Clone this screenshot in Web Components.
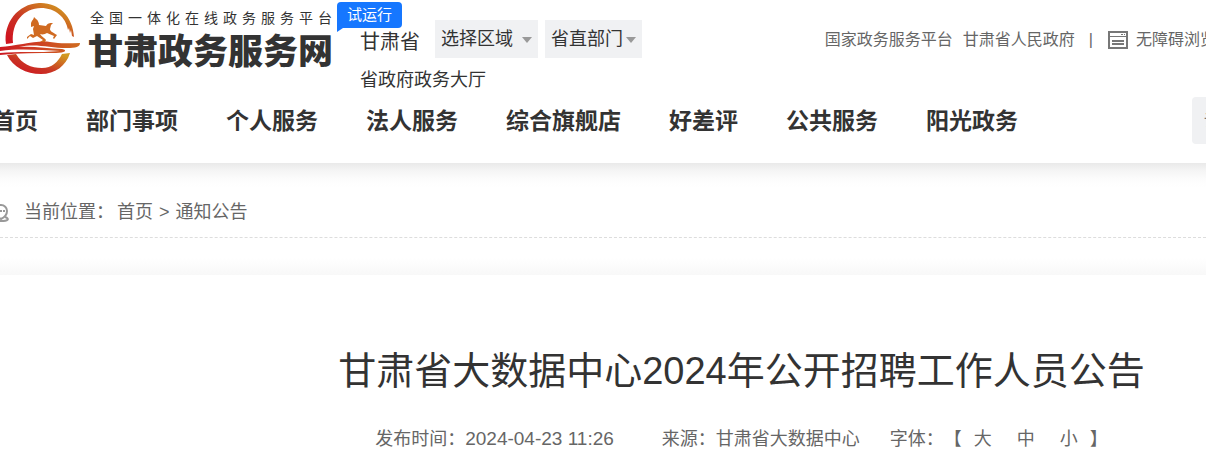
<!DOCTYPE html>
<html lang="zh-CN">
<head>
<meta charset="utf-8">
<meta name="viewport" content="width=device-width, initial-scale=1">
<title>甘肃省大数据中心2024年公开招聘工作人员公告</title>
<style>
  html, body { margin: 0; }
  body {
    overflow-x: clip;
    background: #fff;
    color: #333;
    font-family: "Liberation Sans", "Noto Sans CJK SC", sans-serif;
    font-size: 18px;
    line-height: 24px;
    text-spacing-trim: space-all;
  }
</style>
</head>
<body>
<gs-header>
  <gs-logo slot="brand"></gs-logo>
  <gs-region slot="region"></gs-region>
  <gs-toplinks slot="links"></gs-toplinks>
  <gs-nav slot="nav"></gs-nav>
</gs-header>
<gs-breadcrumb></gs-breadcrumb>
<gs-article>
  <span slot="title">甘肃省大数据中心2024年公开招聘工作人员公告</span>
  <span slot="date">2024-04-23 11:26</span>
  <span slot="source">甘肃省大数据中心</span>
</gs-article>

<script>
function define(name, html) {
  const template = document.createElement('template');
  template.innerHTML = html;
  customElements.define(name, class extends HTMLElement {
    constructor() {
      super();
      this.attachShadow({ mode: 'open' }).append(template.content.cloneNode(true));
    }
  });
}

define('gs-header', `
<style>
  :host { display: block; background: #fff; padding-bottom: 19px; }
  .top { display: flex; align-items: flex-start; min-height: 97px; }
  .links { margin-left: auto; padding-top: 28px; }
</style>
<header>
  <div class="top">
    <slot name="brand"></slot>
    <slot name="region"></slot>
    <div class="links"><slot name="links"></slot></div>
  </div>
  <slot name="nav"></slot>
</header>`);

define('gs-logo', `
<style>
  :host { display: block; position: relative; flex: none; }
  a { display: flex; gap: 8px; color: #333; text-decoration: none; }
  svg { display: block; }
  .words { width: 248px; padding-top: 8px; }
  .sub { display: block; margin: 0 4px 0 2px; font-size: 14px; line-height: 20px;
         text-align: justify; text-align-last: justify; }
  .name { display: block; font-size: 35px; line-height: 48px; font-weight: 900; white-space: nowrap; }
  .badge { position: absolute; left: 337px; top: 2px; width: 65px; box-sizing: border-box;
           background: #1677ff; color: #fff; border-radius: 4px 4px 4px 0;
           font-size: 15px; line-height: 26px; text-align: center; white-space: nowrap; }
  .badge::after { content: ""; position: absolute; left: 0; top: 100%;
                  border-top: 4px solid #1677ff; border-right: 6px solid transparent; }
</style>
<a href="#">
  <svg width="80" height="80" viewBox="0 0 80 80" aria-hidden="true">
    <defs>
      <linearGradient id="g" x1="0.1" y1="0.9" x2="0.9" y2="0.1">
        <stop offset="0" stop-color="#cf1620"/><stop offset="0.4" stop-color="#c93324"/>
        <stop offset="1" stop-color="#d29a20"/>
      </linearGradient>
      <linearGradient id="s" x1="0" x2="1">
        <stop offset="0" stop-color="#cc1822"/><stop offset="1" stop-color="#cf6c20"/>
      </linearGradient>
    </defs>
    <path fill="url(#g)" d="M6 44C3 23 18 4 39 3C58 2 73 16 74 37L72 36L71 30L70 33L69 28L68 30C66 17 55 8 41 8C24 8 11 22 13 43Z"/>
    <path fill="url(#g)" d="M7 55L16 54C22 64 31 68 42 68C52 68 58 62 62 54L70 53C66 66 55 74 41 74C26 74 13 67 7 55Z"/>
    <path fill="url(#s)" d="M0 47C18 46 36 40 50 42C61 44 70 43 80 43C80 47 76 48 67 48C49 48 36 43 19 47C34 46 48 49 62 49C68 50 65 53 56 53C38 53 19 53 0 55V53C18 51 38 53 60 51C42 50 19 48 0 51Z"/>
    <path fill="#d06a21" d="M31 23C32 20 34 19 34 17L36 19C38 20 39 23 39 25L46 26C48 23 49 23 53 23L51 25L50 29C50 31 52 32 57 35L54 39L53 38L54 36L47 33C45 34 43 35 40 34C42 37 45 38 46 40L45 42H40L43 40L37 36L33 38L30 36L27 39V37L31 34L34 35L33 29L34 26L31 27Z"/>
  </svg>
  <span class="words">
    <span class="sub">全国一体化在线政务服务平台</span>
    <span class="name">甘肃政务服务网</span>
  </span>
</a>
<span class="badge">试运行</span>`);

define('gs-region', `
<style>
  :host { display: block; flex: none; margin-left: 24px; padding-top: 20px; }
  .row { display: flex; }
  .prov { font-size: 20px; line-height: 44px; width: 75px; }
  .pick { position: relative; height: 38px; margin-right: 7px; background: #f0f1f3; }
  select { appearance: none; border: 0; border-radius: 0; margin: 0; background: none; color: #333;
           font-family: inherit; font-size: 18px; height: 38px; padding: 0 0 0 6px; }
  .area select { width: 103px; }
  .dept select { width: 97px; }
  svg { position: absolute; right: 6px; top: 17px; pointer-events: none; }
  .hall { display: block; line-height: 32px; color: inherit; text-decoration: none; }
</style>
<div class="row">
  <span class="prov">甘肃省</span>
  <div class="pick area"><select aria-label="选择区域"><option>选择区域</option></select><svg width="10" height="6" aria-hidden="true"><path fill="#999" d="M0 0H10L5 6Z"/></svg></div>
  <div class="pick dept"><select aria-label="省直部门"><option>省直部门</option></select><svg width="10" height="6" aria-hidden="true"><path fill="#999" d="M0 0H10L5 6Z"/></svg></div>
</div>
<a class="hall" href="#">省政府政务大厅</a>`);

define('gs-toplinks', `
<style>
  :host { display: flex; align-items: center; margin-right: -10px; color: #666;
          font-size: 16px; white-space: nowrap; }
  a { color: inherit; text-decoration: none; }
  .gov { margin-left: 10px; }
  .bar { margin: 0 15px 0 14px; }
  svg { display: block; margin-right: 8px; }
</style>
<a href="#">国家政务服务平台</a>
<a class="gov" href="#">甘肃省人民政府</a>
<span class="bar">|</span>
<svg width="20" height="18" viewBox="0 0 20 18" aria-hidden="true">
  <path fill="none" stroke="#777" stroke-width="2" d="M1 1H19V17H1Z"/>
  <path stroke="#777" d="M1 5.500H19"/>
  <path stroke="#777" d="M13 3.500H15M16 3.500H17"/>
  <path stroke="#777" stroke-width="2" d="M4 10H16M4 13H16"/>
</svg>
<a href="#">无障碍浏览</a>`);

define('gs-nav', `
<style>
  :host { display: flex; align-items: center; height: 47px; }
  nav { display: flex; flex: none; gap: 48px; margin-left: -8px; font-size: 23px; font-weight: 700;
        line-height: 32px; white-space: nowrap; }
  a { color: inherit; text-decoration: none; }
  .search { flex: none; margin-left: auto; margin-right: -236px; width: 250px; height: 47px; box-sizing: border-box;
            border: 0; border-radius: 4px; background: #f0f1f3; padding: 0 12px; font-family: inherit;
            font-size: 16px; color: #333; }
</style>
<nav aria-label="主导航">
  <a href="#">首页</a><a href="#">部门事项</a><a href="#">个人服务</a><a href="#">法人服务</a><a href="#">综合旗舰店</a><a href="#">好差评</a><a href="#">公共服务</a><a href="#">阳光政务</a>
</nav>
<input class="search" type="search" aria-label="搜索" placeholder="请输入">`);

define('gs-breadcrumb', `
<style>
  :host { display: block; color: #666; }
  .shade { background: linear-gradient(#e9e9e9, #f5f5f5 8px, #fcfcfc 16px, #fff 24px); padding-top: 30px; }
  nav { display: flex; align-items: center; height: 38px; padding-bottom: 6px;
        border-bottom: 1px dashed #ddd; white-space: nowrap; }
  .fade { height: 37px; background: linear-gradient(#fff 20px, #f8f8f8); }
  a { color: inherit; text-decoration: none; }
  svg { margin: 2px 14px 0 -8px; }
  .label { margin-right: 3px; }
  .gt { margin: 0 6px; }
</style>
<div class="shade">
  <nav aria-label="当前位置">
    <svg width="18" height="20" viewBox="0 0 18 20" fill="none" stroke="#999" stroke-width="2" aria-hidden="true">
      <path d="M9 16C5 14 3 11 3 8A6 6 0 0 1 15 8C15 11 13 14 9 16Z"/>
      <path d="M5 14C0 16 2 18 9 18S18 16 13 14"/>
      <path d="M5 8H7M8 8H10M11 8H13"/>
    </svg>
    <span class="label">当前位置：</span>
    <a href="#">首页</a><span class="gt">&gt;</span><a href="#">通知公告</a>
  </nav>
</div>
<div class="fade"></div>`);

define('gs-article', `
<style>
  :host { display: block; background: #fff; padding: 69px 0 12px 277px; }
  h1 { margin: 0; font-size: 38px; line-height: 54px; font-weight: 400; text-align: center; white-space: nowrap; }
  .meta { display: flex; justify-content: center; color: #666; margin-top: 29px; white-space: nowrap; }
  .date { font-size: 19px; }
  .from { margin-left: 48px; }
  .size { display: flex; margin-left: 30px; }
  button { border: 0; padding: 0; margin: 0; background: none; color: inherit; font: inherit; }
  .sizes { display: flex; gap: 25px; margin: 0 12px; }
</style>
<article>
  <h1><slot name="title"></slot></h1>
  <div class="meta">
    <span>发布时间：<span class="date"><slot name="date"></slot></span></span>
    <span class="from">来源：<slot name="source"></slot></span>
    <span class="size">字体：【<span class="sizes"><button type="button">大</button><button type="button">中</button><button type="button">小</button></span>】</span>
  </div>
</article>`);
</script>
</body>
</html>
